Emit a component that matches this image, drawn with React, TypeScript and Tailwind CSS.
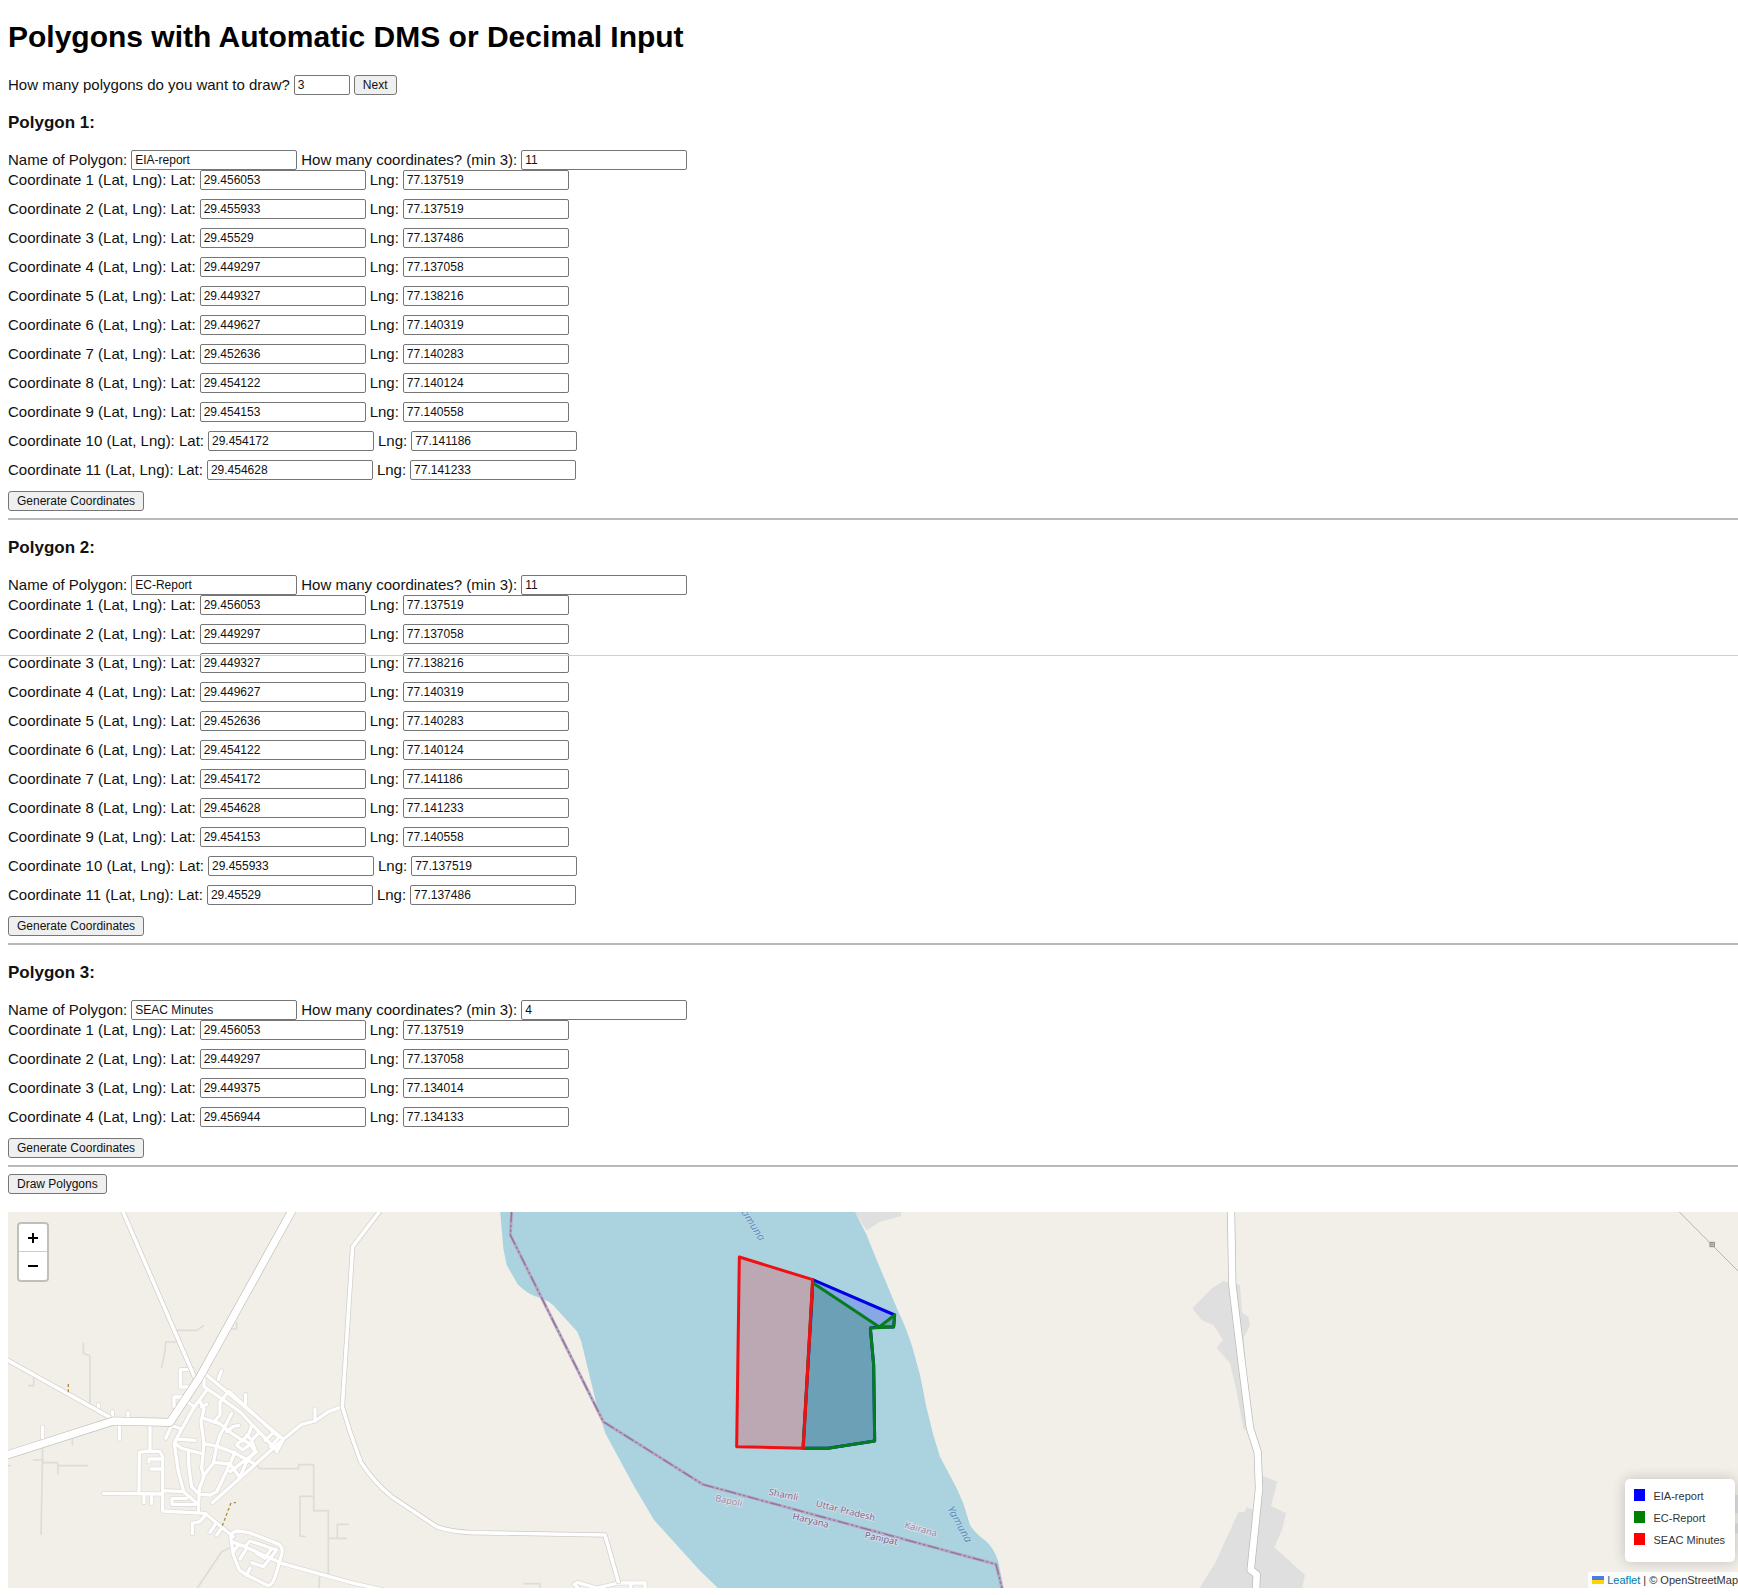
import { useState } from "react";

type Polygon = { name: string; coords: [string, string][] };

const POLYGONS: Polygon[] = [
  {
    name: "EIA-report",
    coords: [
      ["29.456053", "77.137519"],
      ["29.455933", "77.137519"],
      ["29.45529", "77.137486"],
      ["29.449297", "77.137058"],
      ["29.449327", "77.138216"],
      ["29.449627", "77.140319"],
      ["29.452636", "77.140283"],
      ["29.454122", "77.140124"],
      ["29.454153", "77.140558"],
      ["29.454172", "77.141186"],
      ["29.454628", "77.141233"],
    ],
  },
  {
    name: "EC-Report",
    coords: [
      ["29.456053", "77.137519"],
      ["29.449297", "77.137058"],
      ["29.449327", "77.138216"],
      ["29.449627", "77.140319"],
      ["29.452636", "77.140283"],
      ["29.454122", "77.140124"],
      ["29.454172", "77.141186"],
      ["29.454628", "77.141233"],
      ["29.454153", "77.140558"],
      ["29.455933", "77.137519"],
      ["29.45529", "77.137486"],
    ],
  },
  {
    name: "SEAC Minutes",
    coords: [
      ["29.456053", "77.137519"],
      ["29.449297", "77.137058"],
      ["29.449375", "77.134014"],
      ["29.456944", "77.134133"],
    ],
  },
];

const INPUT = "h-5 rounded-[2px] border border-[#767676] bg-white px-[3px] text-xs leading-4 text-[#111]";
const BUTTON =
  "h-5 rounded-[3px] border border-[#767676] bg-[#efefef] px-2 text-xs leading-4 text-[#111] hover:bg-[#e5e5e5]";

function CoordinateRow({ poly, index, value }: { poly: number; index: number; value: [string, string] }) {
  const id = `p${poly}-c${index}`;
  return (
    <div className="flex items-center gap-1">
      <label htmlFor={`${id}-lat`}>
        Coordinate {index} (Lat, Lng): Lat:
      </label>
      <input id={`${id}-lat`} type="text" defaultValue={value[0]} className={`${INPUT} w-[166px]`} />
      <label htmlFor={`${id}-lng`}>Lng:</label>
      <input id={`${id}-lng`} type="text" defaultValue={value[1]} className={`${INPUT} w-[166px]`} />
    </div>
  );
}

function PolygonForm({ number, polygon }: { number: number; polygon: Polygon }) {
  return (
    <section className="border-b-2 border-[#b9b9b9] pt-[18px] pb-[7px]">
      <h3 className="text-[17px] leading-5 font-bold">Polygon {number}:</h3>
      <div className="mt-[17px] flex items-center gap-1">
        <label htmlFor={`p${number}-name`}>Name of Polygon:</label>
        <input id={`p${number}-name`} type="text" defaultValue={polygon.name} className={`${INPUT} w-[166px]`} />
        <label htmlFor={`p${number}-count`}>How many coordinates? (min 3):</label>
        <input
          id={`p${number}-count`}
          type="text"
          inputMode="numeric"
          defaultValue={polygon.coords.length}
          className={`${INPUT} w-[166px]`}
        />
      </div>
      <div className="flex flex-col gap-[9px]">
        {polygon.coords.map((c, i) => (
          <CoordinateRow key={i} poly={number} index={i + 1} value={c} />
        ))}
      </div>
      <button type="button" className={`${BUTTON} mt-[11px] block`}>
        Generate Coordinates
      </button>
    </section>
  );
}

const TRACKS = [
  "M530 376 H590 L612 361",
  "M530 411 H497 L495 440 L484 490",
  "M250 413 V445 L270 452 V600",
  "M85 542 H101 V518",
  "M710 352 V372 H692",
  "M217 700 V722",
  "M98 765 H128 L130 773 H172 L174 782 H264 M174 782 V808",
  "M128 730 L123 990",
  "M24 782 H34",
  "M770 780 L780 791 H896 V779 H941 V917 H985 V1110",
  "M941 874 H900 V993 L917 995",
  "M985 1000 H1040 M1012 1000 V958 H1046",
  "M958 1115 V1149",
  "M592 1149 L665 1040 L690 1028",
  "M1570 1136 H1620 V1149",
];

const STREETS = [
  "M580 494 H541 V546 H566",
  "M570 576 H522 V605 H545",
  "M553 582 L582 606",
  "M612 503 L850 703",
  "M612 503 V545 L672 586 L722 622 L750 652 L815 720 L832 738",
  "M688 560 L830 690",
  "M655 523 L664 498 M737 602 V568 M945 648 V612",
  "M684 560 L660 592 V630 L642 650",
  "M620 556 L580 610 L535 690 L523 715",
  "M600 590 L612 612 L603 650 L612 716 L605 790 L612 815 L598 850 L595 920",
  "M605 606 L620 598 M612 640 L640 650 L660 656 L695 685 L728 706 L748 715 L765 740 L740 770 L720 815",
  "M695 625 L680 655 L660 690 L650 725 L640 775 L608 815",
  "M680 680 L700 664 L716 662",
  "M756 660 L745 690 L728 706 M776 684 L755 705 M740 690 L755 705 L765 735",
  "M710 720 L728 735 L745 722 M728 706 L712 716",
  "M525 715 L545 730 L602 745",
  "M530 702 L585 706",
  "M612 716 L655 725 L700 742 L760 775",
  "M640 772 L690 777 L718 815 M705 742 L690 777",
  "M770 740 L690 800 M690 777 L650 860 L632 870 L598 868",
  "M820 683 L795 706 M838 696 L812 725 M850 703 L830 740",
  "M523 715 L535 800 L552 862 L595 898",
  "M565 742 L567 790 L575 845 L598 868",
  "M512 660 L545 672 M515 660 L497 700",
  "M850 703 L637 893",
  "M1028 605 L985 620 L945 648 L905 658 L850 703",
  "M450 655 V738",
  "M417 865 L418 742 L445 738 L480 740 L488 755 V918 L615 925 L700 995",
  "M488 762 H447 V771 M488 792 H453",
  "M310 865 L488 867 M488 857 L552 860",
  "M432 870 V893 M455 870 V896",
  "M595 898 H516 V880 H560",
  "M618 928 L600 950 L577 955 V986 M648 955 L630 982 M665 970 L650 990",
  "M128 712 V666 M358 655 V702 M337 648 V620 M384 648 V622 M295 612 V598",
  "M693 1000 Q690 980 715 978 L745 982 L830 1015 Q850 1022 846 1045 L830 1100 Q820 1140 805 1142 L740 1110 L718 1095 L700 1050 Z",
  "M695 1010 L735 1025 L845 1075 L1050 1132",
  "M735 1025 L750 1008 L780 1018 L830 1035 M815 1030 L795 1060 L770 1045 M830 1035 L790 1085 L755 1073 M720 1062 L740 1030 M700 1040 L715 1020 M740 1110 L750 1090",
  "M1050 1132 L1150 1155",
  "M1735 1149 L1722 1138 L1732 1132 L1790 1149 M1790 1149 L1855 1134 H1935 V1149 M1890 1149 L1895 1134",
];

const LANES = [
  "M368 18 L583 515",
  "M20 464 L330 637",
  "M1140 18 L1058 125 L1027 605 L1050 680 L1082 770 Q1120 830 1175 875 L1310 965 Q1350 980 1420 983 L1815 990 L1855 1130",
];

const HIGHWAYS = ["M877 15 L600 515 L510 652 L340 648 L15 752"];

function Roads({ paths, width, edge }: { paths: string[]; width: number; edge: string }) {
  return (
    <g fill="none" strokeLinejoin="round">
      {paths.map((d) => (
        <path key={d} d={d} stroke={edge} strokeWidth={width + 4} strokeLinecap="round" />
      ))}
      {paths.map((d) => (
        <path key={`${d}-top`} d={d} stroke="#fff" strokeWidth={width} strokeLinecap="round" />
      ))}
    </g>
  );
}

const PLACES = [
  { t: "Bapoli", x: 2144, y: 888, r: 12, c: "#a188a8" },
  { t: "Shamli", x: 2305, y: 869, r: 12, c: "#8a6590" },
  { t: "Uttar Pradesh", x: 2446, y: 904, r: 14, c: "#8a6590" },
  { t: "Haryana", x: 2376, y: 942, r: 14, c: "#835c8a" },
  { t: "Panipat", x: 2593, y: 999, r: 12, c: "#835c8a" },
  { t: "Kairana", x: 2712, y: 968, r: 16, c: "#a188a8" },
];

const BORDER = "M1535 18 L1531 90 L1810 650 L2108 838 L2988 1078 L3006 1150";

function MapDrawing() {
  return (
    <svg
      viewBox="24 21 5190 1128"
      preserveAspectRatio="xMinYMin slice"
      className="block h-full w-full"
      role="img"
      aria-label="Map of the polygons along the Yamuna"
    >
      <rect x="0" y="0" width="5300" height="1200" fill="#f2efe9" />
      <g fill="#dfdfdf">
        <path d="M2560 15 L2600 76 L2640 50 L2703 33 V15 Z" />
        <path d="M3670 228 L3638 248 L3577 310 L3605 345 L3640 360 L3669 404 L3650 428 L3690 475 L3710 560 L3730 672 L3752 680 L3720 240 Z" />
        <path d="M3715 315 L3745 335 L3750 362 L3732 395 L3715 395 Z" />
        <path d="M3785 812 L3832 830 L3813 902 L3858 925 L3846 975 L3823 1027 L3915 1110 L3905 1155 H3595 L3645 1075 L3715 922 L3735 920 L3740 907 L3765 915 Z" />
        <path d="M5205 870 h30 v55 h-30 Z M5205 955 h30 v30 h-30 Z" />
      </g>
      <path
        d="M1500 15 L1510 130 L1520 180 L1553 238 Q1580 265 1605 274 Q1650 284 1675 318 L1732 380 L1744 410 L1790 600 L1816 685 L1900 840 L1962 945 L2100 1097 L2160 1155 H3012 L2995 1070 Q2985 1035 2960 1010 Q2925 985 2910 960 L2890 895 L2870 850 L2820 755 L2800 690 L2780 610 L2760 510 L2738 430 Q2720 370 2695 320 L2670 260 L2630 165 L2600 90 L2562 15 Z"
        fill="#aad3df"
      />
      <g fill="none">
        {TRACKS.map((d) => (
          <path key={d} d={d} stroke="#dedcd8" strokeWidth="5" strokeLinejoin="round" />
        ))}
      </g>
      <Roads paths={STREETS} width={10} edge="#dad8d5" />
      <Roads paths={LANES} width={11} edge="#cdcbc7" />
      <Roads paths={HIGHWAYS} width={22} edge="#c2c0bc" />
      <Roads
        paths={[
          "M3693 10 L3697 240 L3726 480 L3750 670 L3773 740 L3777 850 L3765 970 L3752 1095 L3770 1108 L3768 1160",
        ]}
        width={20}
        edge="#b9b7b4"
      />
      <path d="M205 537 V566 M667 962 L692 896 L708 892" fill="none" stroke="#b28d48" strokeWidth="4" strokeDasharray="9 7" />
      <path d="M5037 20 L5218 202" fill="none" stroke="#b5b3b0" strokeWidth="3" />
      <rect x="5130" y="112" width="13" height="13" fill="#d8d6d2" stroke="#8b8987" strokeWidth="3" />
      <path d="M5136 112 v13 M5130 118 h13" stroke="#8b8987" strokeWidth="2" />
      <path d={BORDER} fill="none" stroke="#b7a5c2" strokeWidth="9" />
      <path d={BORDER} fill="none" stroke="#8f7497" strokeWidth="4" strokeDasharray="34 8 6 8 6 8" />
      <g fontFamily='"Noto Sans", sans-serif' fontSize="28" stroke="#d7e3ea" strokeWidth="5" paintOrder="stroke">
        {PLACES.map((p) => (
          <text key={p.t} x="0" y="0" fill={p.c} transform={`translate(${p.x} ${p.y}) rotate(${p.r})`}>
            {p.t}
          </text>
        ))}
      </g>
      <g fontFamily='"Noto Sans", sans-serif' fontSize="33" fontStyle="italic" fill="#5c8dbd" stroke="#c3dfe8" strokeWidth="3" paintOrder="stroke">
        <text transform="translate(2214 10) rotate(57)">Yamuna</text>
        <text transform="translate(2840 911) rotate(61)">Yamuna</text>
      </g>
      <g strokeWidth="9" strokeLinejoin="round" fillOpacity="0.2">
        <polygon
          points="2438,224 2438,233 2436,281 2409,730 2484,730 2624,708 2621,480 2611,369 2638,366 2681,366 2684,330"
          fill="blue"
          stroke="#0000e6"
        />
        <polygon
          points="2438,224 2409,730 2484,730 2624,708 2621,480 2611,369 2681,366 2684,330 2638,366 2438,233 2436,281"
          fill="green"
          stroke="#057d1c"
        />
        <polygon points="2438,224 2410,730 2210,725 2218,156" fill="red" stroke="#ee1014" />
      </g>
    </svg>
  );
}

const LEGEND = [
  { name: "EIA-report", swatch: "bg-[#0000ff]" },
  { name: "EC-Report", swatch: "bg-[#008000]" },
  { name: "SEAC Minutes", swatch: "bg-[#ff0000]" },
];

export default function App() {
  const [count, setCount] = useState("3");
  return (
    <main className='relative overflow-hidden bg-white pt-5 pb-[7px] pl-2 font-["Liberation_Sans",Arial,sans-serif] text-[15px] leading-[18px] text-[#111]'>
      <h1 className="text-[30px] leading-[34px] font-bold text-black">Polygons with Automatic DMS or Decimal Input</h1>
      <div className="mt-[21px] flex items-center gap-1">
        <label htmlFor="polygon-count">How many polygons do you want to draw?</label>
        <input
          id="polygon-count"
          type="text"
          inputMode="numeric"
          value={count}
          onChange={(e) => setCount(e.target.value)}
          className={`${INPUT} w-[56px]`}
        />
        <button type="button" className={BUTTON}>
          Next
        </button>
      </div>
      {POLYGONS.map((p, i) => (
        <PolygonForm key={p.name} number={i + 1} polygon={p} />
      ))}
      <button type="button" className={`${BUTTON} mt-[7px] block`}>
        Draw Polygons
      </button>

      <div className="relative mt-[18px] h-[376px] overflow-hidden">
        <MapDrawing />
        <div className="absolute top-[10px] left-[9px] flex w-8 flex-col rounded-[4px] border-2 border-black/20 bg-white bg-clip-padding">
          <button type="button" aria-label="Zoom in" className="flex h-7 items-center justify-center border-b border-[#ccc]">
            <svg viewBox="0 0 12 12" className="size-3" stroke="#000" strokeWidth="2">
              <path d="M1 6h10M6 1v10" />
            </svg>
          </button>
          <button type="button" aria-label="Zoom out" className="flex h-7 items-center justify-center">
            <svg viewBox="0 0 12 12" className="size-3" stroke="#000" strokeWidth="2">
              <path d="M1 6h10" />
            </svg>
          </button>
        </div>
        <ul className="absolute right-[3px] bottom-[26px] flex flex-col gap-1 rounded-[5px] bg-white pt-2 pr-[10px] pb-[13px] pl-[9px] text-[11px] leading-[18px] text-[#333] shadow-[0_0_14px_rgba(0,0,0,0.2)]">
          {LEGEND.map((l) => (
            <li key={l.name} className="flex items-center gap-2">
              <span className={`mb-[3px] h-3 w-[11px] ${l.swatch}`} />
              {l.name}
            </li>
          ))}
        </ul>
        <div className="absolute right-0 bottom-0 flex h-4 items-center gap-[3px] bg-white/80 pl-1 text-[11px] leading-4 whitespace-nowrap text-[#333]">
          <a href="#leaflet" className="flex items-center gap-[3px] text-[#0078a8]">
            <svg viewBox="0 0 12 8" className="h-2 w-3">
              <path d="M0 0h12v4H0z" fill="#4c7be1" />
              <path d="M0 4h12v4H0z" fill="#ffd500" />
            </svg>
            Leaflet
          </a>
          <span>| © OpenStreetMap</span>
        </div>
      </div>
      <div className="pointer-events-none absolute top-[655px] right-0 left-0 h-px bg-[#cfcfcf]" />
    </main>
  );
}
